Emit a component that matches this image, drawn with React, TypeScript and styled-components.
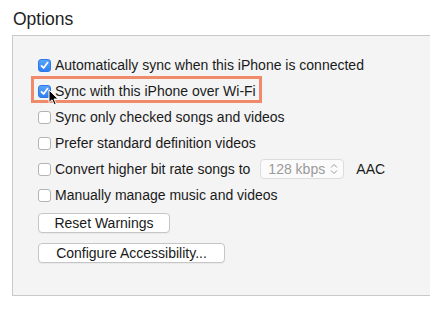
import React from 'react'
import styled, { createGlobalStyle } from 'styled-components'

const Global = createGlobalStyle`
  html, body {
    margin: 0;
    background: #ffffff;
    overflow: hidden;
  }
  body {
    font-family: "Liberation Sans", Arial, sans-serif;
    color: #1a1a1a;
  }
`

const Page = styled.div`
  width: 430px;
  height: 310px;
  position: relative;
  overflow: hidden;
`

const Title = styled.h1`
  margin: 0;
  padding: 8px 0 0 13px;
  height: 27px;
  font-size: 17.5px;
  font-weight: normal;
  line-height: 22px;
  color: #222;
`

const Panel = styled.div`
  margin-left: 12px;
  width: 440px;
  height: 261px;
  background: #f4f4f4;
  border: 1px solid #c9c9c9;
  padding: 16px 0 0 25px;
  box-sizing: border-box;
  display: flex;
  flex-direction: column;
`

const Row = styled.label`
  position: relative;
  display: flex;
  align-items: center;
  height: 26px;
  font-size: 14px;
  gap: 4px;
`

const Box = styled.span<{ $checked?: boolean }>`
  width: 13px;
  height: 13px;
  box-sizing: border-box;
  border-radius: 3px;
  display: flex;
  align-items: center;
  justify-content: center;
  flex: none;
  background: ${p => (p.$checked ? 'linear-gradient(#5aa4fb, #2f7ff0)' : '#ffffff')};
  border: 1px solid ${p => (p.$checked ? '#2f79e6' : '#b3b3b3')};
`

const Highlight = styled.span`
  position: absolute;
  left: -7px;
  top: -2px;
  width: 231px;
  height: 27px;
  box-sizing: border-box;
  border: 3px solid #ef8a6b;
  pointer-events: none;
`

const Popup = styled.span`
  margin-left: 6px;
  width: 84px;
  height: 20px;
  box-sizing: border-box;
  background: #fbfbfb;
  border: 1px solid #dcdcdc;
  border-radius: 4px;
  display: flex;
  align-items: center;
  justify-content: space-between;
  padding: 0 5px 0 7px;
  color: #9a9a9a;
`

const Suffix = styled.span`
  margin-left: 8px;
`

const Button = styled.button<{ $w: number }>`
  width: ${p => p.$w}px;
  height: 20px;
  margin-top: 10px;
  padding: 0;
  background: #ffffff;
  border: 1px solid #c6c6c6;
  border-radius: 4px;
  font-family: inherit;
  font-size: 14px;
  color: #1a1a1a;
  box-shadow: 0 1px 0 rgba(0, 0, 0, 0.04);
  &:first-of-type {
    margin-top: 5px;
  }
`

const Cursor = styled.svg`
  position: absolute;
  left: 48px;
  top: 89px;
`

const Check = () => (
  <svg width="9" height="9" viewBox="0 0 9 9">
    <path d="M1.5 4.8 L3.6 7 L7.6 1.6" fill="none" stroke="#fff" strokeWidth="1.7" strokeLinecap="round" strokeLinejoin="round" />
  </svg>
)

const Stepper = () => (
  <svg width="8" height="12" viewBox="0 0 8 12">
    <path d="M1 4.5 L4 1.5 L7 4.5 M1 7.5 L4 10.5 L7 7.5" fill="none" stroke="#9a9a9a" strokeWidth="1" />
  </svg>
)

const options = [
  { text: 'Automatically sync when this iPhone is connected', checked: true },
  { text: 'Sync with this iPhone over Wi-Fi', checked: true, marked: true },
  { text: 'Sync only checked songs and videos' },
  { text: 'Prefer standard definition videos' },
  { text: 'Convert higher bit rate songs to', popup: true },
  { text: 'Manually manage music and videos' },
]

const App = () => (
  <Page>
    <Global />
    <Title>Options</Title>
    <Panel>
      {options.map(o => (
        <Row key={o.text}>
          <Box $checked={o.checked}>{o.checked && <Check />}</Box>
          {o.text}
          {o.popup && (
            <>
              <Popup>
                128 kbps
                <Stepper />
              </Popup>
              <Suffix>AAC</Suffix>
            </>
          )}
          {o.marked && <Highlight />}
        </Row>
      ))}
      <Button $w={132}>Reset Warnings</Button>
      <Button $w={187}>Configure Accessibility...</Button>
    </Panel>
    <Cursor width="12" height="17" viewBox="0 0 12 17">
      <path d="M1 1 L1 13.5 L4 10.8 L6.2 15.6 L8.2 14.7 L6 10 L10.2 10 Z" fill="#000" stroke="#fff" strokeWidth="1" strokeLinejoin="round" />
    </Cursor>
  </Page>
)

export default App
